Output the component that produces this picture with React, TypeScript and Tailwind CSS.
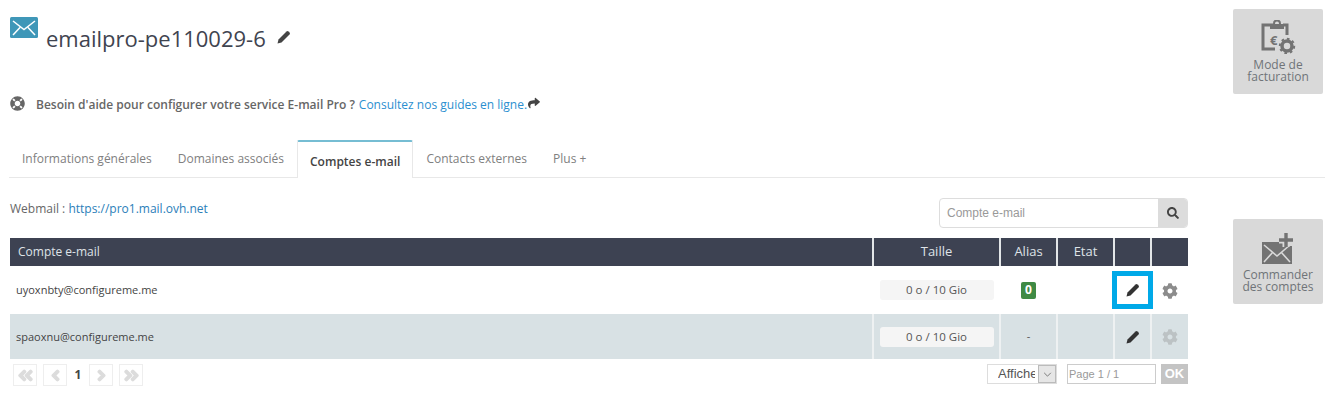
import {
  FaAngleDoubleLeft,
  FaAngleDoubleRight,
  FaAngleLeft,
  FaAngleRight,
  FaCog,
  FaLifeRing,
  FaSearch,
  FaShare
} from "react-icons/fa";

const font = "font-['Open_Sans',sans-serif]";

const tabs = ["Informations générales", "Domaines associés", "Comptes e-mail", "Contacts externes", "Plus +"];

function MailIcon() {
  return (
    <svg viewBox="0 0 28 21" className="h-[21px] w-[28px]" aria-hidden>
      <rect width="28" height="21" rx="1.5" fill="#3f97b8" />
      <path d="M3 4 L14 12.5 L25 4 M3 18 L10 10.5 M25 18 L18 10.5" fill="none" stroke="#fff" strokeWidth="1.5" />
    </svg>
  );
}

function Pencil({ className }: { className: string }) {
  return (
    <svg viewBox="0 0 14 14" className={className} fill="currentColor" aria-hidden>
      <path d="M0.5 13.5 L1.5 9.5 L9.5 1.5 Q10.5 0.5 11.5 1.5 L12.5 2.5 Q13.5 3.5 12.5 4.5 L4.5 12.5 Z" />
    </svg>
  );
}

function BillingIcon() {
  return (
    <svg viewBox="0 0 36 34" className="h-[34px] w-[36px]" aria-hidden>
      <path d="M13 5 H3 V29 H15 M23 5 H27 V15" fill="none" stroke="#737373" strokeWidth="3" />
      <rect x="10" y="4" width="14" height="5" fill="#737373" />
      <circle cx="17" cy="3.5" r="3" fill="none" stroke="#737373" strokeWidth="2" />
      <text x="10" y="25" fontSize="13" fontWeight="700" fill="#737373" fontFamily="Open Sans">€</text>
      <circle cx="27" cy="26" r="5" fill="none" stroke="#737373" strokeWidth="3.5" />
      <circle cx="27" cy="26" r="7.2" fill="none" stroke="#737373" strokeWidth="2" strokeDasharray="2.6 3" />
    </svg>
  );
}

function OrderIcon() {
  return (
    <svg viewBox="0 0 34 32" className="h-[32px] w-[34px]" aria-hidden>
      <path d="M1 10 H22 V14 H31 V32 H1 Z" fill="#737373" />
      <path d="M3 13 L16 24 L29 13 M3 30 L12 20 M29 30 L20 20" fill="none" stroke="#d9d9d9" strokeWidth="1.6" />
      <path d="M25 1 V15 M18 8 H32" stroke="#d9d9d9" strokeWidth="7" />
      <path d="M25 1 V15 M18 8 H32" stroke="#737373" strokeWidth="3.4" />
    </svg>
  );
}

function SideButton({ icon, lines, className }: { icon: JSX.Element; lines: string[]; className: string }) {
  return (
    <div className={`flex h-[85px] w-[90px] flex-col items-center justify-end rounded-[2px] bg-[#d9d9d9] pb-[11px] text-center text-[12px] leading-[12px] text-[#6f7478] ${className}`}>
      <div className="mb-[5px]">{icon}</div>
      {lines.map((line) => (
        <div key={line}>{line}</div>
      ))}
    </div>
  );
}

function Quota() {
  return (
    <div className="mx-auto flex h-[20px] w-[114px] items-center justify-center rounded-[3px] bg-[#f5f5f5] text-[11.5px] text-[#555]">
      0 o / 10 Gio
    </div>
  );
}

function PageButton({ children }: { children: JSX.Element }) {
  return (
    <div className="flex h-[22px] w-[24px] items-center justify-center border border-[#eeeeee] text-[17px] text-[#dcdcdc]">
      {children}
    </div>
  );
}

export default function App() {
  return (
    <div className={`${font} flex h-[413px] w-[1344px] overflow-hidden bg-white pl-[10px] text-[#555]`}>
      <div className="w-[1178px] shrink-0">
        <div className="flex h-[59px] items-start pt-[17px]">
          <MailIcon />
          <h1 className="ml-[8px] mt-[4px] text-[22px] leading-[34px] text-[#3f4450]">emailpro-pe110029-6</h1>
          <Pencil className="ml-[11px] mt-[13px] h-[14px] w-[14px] text-[#444]" />
        </div>

        <div className="mt-[37px] flex h-[18px] items-center text-[12px]">
          <FaLifeRing className="mt-[-3px] h-[15px] w-[15px] text-[#666]" aria-hidden />
          <span className="ml-[11px] font-semibold text-[#666]">Besoin d'aide pour configurer votre service E-mail Pro ?</span>
          <span className="ml-[4px] text-[#2b8fd0]">Consultez nos guides en ligne.</span>
          <FaShare className="ml-[1px] mt-[-4px] h-[12px] w-[12px] text-[#444]" aria-hidden />
        </div>

        <div className="ml-[-1px] mr-[-137px] mt-[27px] flex h-[37px] items-end border-b border-[#e8e8e8]">
          {tabs.map((tab) =>
            tab === "Comptes e-mail" ? (
              <div
                key={tab}
                className="mb-[-1px] flex h-[38px] items-center rounded-t-[2px] border-x border-t-2 border-x-[#e8e8e8] border-t-[#76bdd3] bg-white px-[12px] pt-[3px] text-[12px] font-semibold text-[#444]"
              >
                {tab}
              </div>
            ) : (
              <div key={tab} className="flex h-[37px] items-center px-[13px] pt-[1px] text-[12px] text-[#808080]">
                {tab}
              </div>
            )
          )}
        </div>

        <div className="mt-[20px] flex items-start justify-between">
          <div className="mt-[2px] text-[12px] leading-[17px] text-[#666]">
            Webmail : <span className="text-[#2b80b9]">https://pro1.mail.ovh.net</span>
          </div>
          <div className="flex h-[30px] w-[249px] overflow-hidden rounded-[4px] border border-[#dddddd]">
            <div className="flex flex-1 items-center px-[7px] font-['Liberation_Sans',sans-serif] text-[12px] text-[#999]">Compte e-mail</div>
            <div className="flex w-[29px] items-center justify-center bg-[#dcdcdc]">
              <FaSearch className="h-[12px] w-[12px] text-[#444]" aria-hidden />
            </div>
          </div>
        </div>

        <table className="mt-[10px] w-[1178px] table-fixed border-collapse text-[11px]">
          <colgroup>
            <col className="w-[863px]" />
            <col className="w-[127px]" />
            <col className="w-[57px]" />
            <col className="w-[57px]" />
            <col className="w-[37px]" />
            <col className="w-[37px]" />
          </colgroup>
          <thead>
            <tr className="h-[28px] bg-[#3d4252] text-[13px] text-[#dfe3e8]">
              <th className="pl-[8px] text-left text-[12px] font-normal">Compte e-mail</th>
              <th className="border-l-2 border-[#e3e6e8] text-center font-normal">Taille</th>
              <th className="border-l-2 border-[#e3e6e8] text-center font-normal">Alias</th>
              <th className="border-l-2 border-[#e3e6e8] text-center font-normal">Etat</th>
              <th className="border-l-2 border-[#e3e6e8]" />
              <th className="border-l-2 border-[#e3e6e8]" />
            </tr>
          </thead>
          <tbody>
            <tr className="h-[48px] bg-white">
              <td className="pl-[6px] pt-[1px] text-[#444]">uyoxnbty@configureme.me</td>
              <td><Quota /></td>
              <td className="text-center">
                <span className="inline-flex h-[17px] w-[15px] items-center justify-center rounded-[2px] bg-[#3f8a44] text-[12px] font-bold text-white">0</span>
              </td>
              <td />
              <td className="p-0">
                <div className="flex h-[38px] w-[41px] -translate-x-[2px] items-center justify-center border-[5px] border-[#00a9e8]">
                  <Pencil className="h-[14px] w-[14px] text-[#333]" />
                </div>
              </td>
              <td className="text-center">
                <FaCog className="inline h-[16px] w-[16px] text-[#8c8c8c]" aria-hidden />
              </td>
            </tr>
            <tr className="h-[45px] bg-[#d8e1e4]">
              <td className="pl-[6px] pt-[1px] text-[#444]">spaoxnu@configureme.me</td>
              <td className="border-l-2 border-[#eef1f2]"><Quota /></td>
              <td className="border-l-2 border-[#eef1f2] text-center">-</td>
              <td className="border-l-2 border-[#eef1f2]" />
              <td className="border-l-2 border-[#eef1f2] text-center">
                <Pencil className="inline h-[14px] w-[14px] text-[#333]" />
              </td>
              <td className="border-l-2 border-[#eef1f2] text-center">
                <FaCog className="inline h-[16px] w-[16px] text-[#bcc2c4]" aria-hidden />
              </td>
            </tr>
          </tbody>
        </table>

        <div className="mt-[5px] flex h-[22px] items-start">
          <div className="ml-[3px] flex items-center gap-[6px]">
            <PageButton><FaAngleDoubleLeft stroke="currentColor" strokeWidth={40} aria-hidden /></PageButton>
            <PageButton><FaAngleLeft stroke="currentColor" strokeWidth={40} aria-hidden /></PageButton>
            <div className="w-[10px] text-center text-[12px] font-bold text-[#444]">1</div>
            <PageButton><FaAngleRight stroke="currentColor" strokeWidth={40} aria-hidden /></PageButton>
            <PageButton><FaAngleDoubleRight stroke="currentColor" strokeWidth={40} aria-hidden /></PageButton>
          </div>
          <div className="ml-auto flex h-[20px] w-[70px] items-center border border-[#dddddd] pl-[10px] font-['Liberation_Sans',sans-serif] text-[13px] text-[#555]">
            <span className="w-[37px] overflow-hidden whitespace-nowrap">Afficher</span>
            <span className="ml-auto flex h-[18px] w-[18px] items-center justify-center border border-[#bbb] bg-[#e6e6e6]">
              <svg viewBox="0 0 10 6" className="h-[5px] w-[9px] text-[#666]" fill="none" stroke="currentColor" strokeWidth="1" aria-hidden>
                <path d="M1 1 L5 5 L9 1" />
              </svg>
            </span>
          </div>
          <div className="ml-[10px] flex h-[20px] w-[89px] items-center border border-[#cccccc] pl-[1px] font-['Liberation_Sans',sans-serif] text-[11px] text-[#999]">
            Page 1 / 1
          </div>
          <div className="ml-[5px] flex h-[20px] w-[27px] items-center justify-center bg-[#c4c4c4] font-['Liberation_Sans',sans-serif] text-[13px] font-bold text-white">OK</div>
        </div>
      </div>

      <div className="ml-[45px] flex shrink-0 flex-col">
        <SideButton icon={<BillingIcon />} lines={["Mode de", "facturation"]} className="mt-[9px]" />
        <SideButton icon={<OrderIcon />} lines={["Commander", "des comptes"]} className="mt-[125px]" />
      </div>
    </div>
  );
}
